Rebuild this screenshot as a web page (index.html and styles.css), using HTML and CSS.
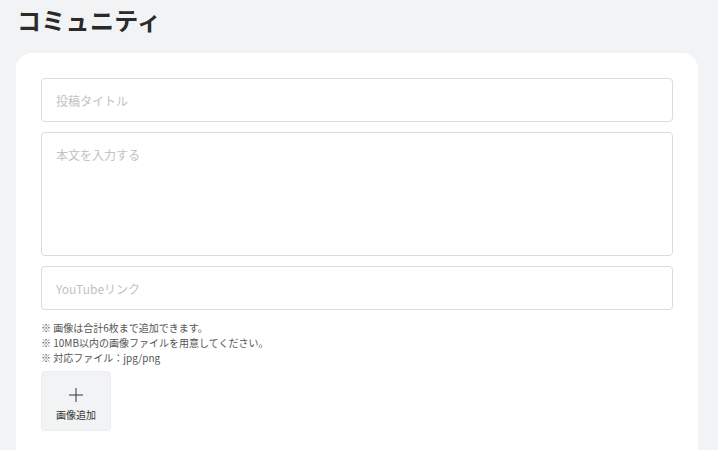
FILE: index.html
```html
<!DOCTYPE html>
<html lang="ja">
<head>
<meta charset="utf-8">
<link rel="stylesheet" href="styles.css">
</head>
<body>
<div class="page">
  <h1 class="title">コミュニティ</h1>
  <div class="card">
    <input class="field" type="text" placeholder="投稿タイトル">
    <textarea class="field area" placeholder="本文を入力する"></textarea>
    <input class="field" type="text" placeholder="YouTubeリンク">
    <div class="notes">
      <p>※ 画像は合計6枚まで追加できます。</p>
      <p>※ 10MB以内の画像ファイルを用意してください。</p>
      <p>※ 対応ファイル：jpg/png</p>
    </div>
    <button class="add" type="button">
      <svg width="14" height="14" viewBox="0 0 14 14"><path d="M7 0V14M0 7H14" stroke="#333" stroke-width="1" fill="none"/></svg>
      <span>画像追加</span>
    </button>
  </div>
</div>
</body>
</html>
```
FILE: styles.css
```css
* { box-sizing: border-box; }
html, body {
  margin: 0;
  padding: 0;
  background: #f2f3f5;
  font-family: "Noto Sans CJK JP", "Noto Sans", sans-serif;
  color: #222;
}
.page {
  padding: 4px 20px 0 16px;
}
.title {
  margin: 0;
  font-size: 24px;
  font-weight: 700;
  line-height: 32px;
  height: 49px;
  color: #2a2a2a;
  padding-left: 1px;
  letter-spacing: 0.3px;
}
.card {
  background: #fff;
  border-radius: 16px;
  padding: 25px 25px 40px 25px;
  display: flex;
  flex-direction: column;
  align-items: flex-start;
  min-height: 397px;
}
.field {
  display: block;
  width: 100%;
  height: 44px;
  border: 1px solid #dcdcdc;
  border-radius: 4px;
  padding: 0 14px;
  font-family: inherit;
  font-size: 12px;
  color: #333;
  background: #fff;
  outline: none;
  margin: 0 0 10px 0;
}
.field::placeholder { color: #c2c2c2; }
.area {
  height: 124px;
  padding-top: 12px;
  resize: none;
  line-height: 20px;
}
.notes {
  margin-top: 0;
  font-size: 10px;
  line-height: 15px;
  color: #555;
}
.notes p { margin: 0; }
.add {
  margin-top: 6px;
  width: 70px;
  height: 60px;
  border: 1px solid #eceef0;
  border-radius: 4px;
  background: #f2f3f5;
  display: flex;
  flex-direction: column;
  align-items: center;
  padding: 16px 0 0 0;
  gap: 5px;
  font-family: inherit;
  font-size: 10px;
  line-height: 15px;
  color: #333;
}
.add svg { display: block; }
```
